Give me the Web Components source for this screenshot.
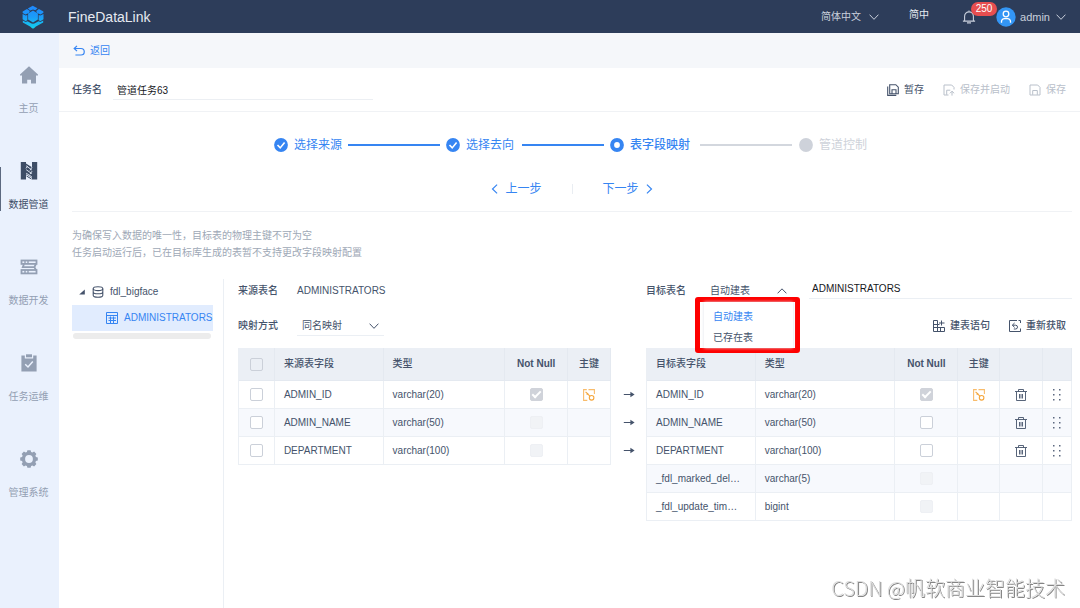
<!DOCTYPE html>
<html lang="zh-CN">
<head>
<meta charset="utf-8">
<meta name="viewport" content="width=device-width, initial-scale=1">
<title>FineDataLink</title>
<style>
  html, body { margin: 0; height: 100%; }
  body {
    font-family: "Liberation Sans", "Noto Sans CJK SC", sans-serif;
    font-size: 10px;
    line-height: 16px;
    color: #45536b;
    background: #fff;
    --blue: #3685f2;
    --muted: #9ea8b6;
    --line: #ebeff4;
  }
</style>
</head>
<body>
<fdl-app></fdl-app>

<script>
const RESET = `
  *, *::before, *::after { box-sizing: border-box; }
  button, input, select { font: inherit; color: inherit; background: none; border: 0; padding: 0; margin: 0; outline: 0; }
  button, a, select { cursor: pointer; }
  button:disabled { cursor: default; }
  a { color: inherit; text-decoration: none; }
  ul { list-style: none; margin: 0; padding: 0; }
`;

class Base extends HTMLElement {
  connectedCallback() {
    if (this.shadowRoot) return;
    const t = document.createElement('template');
    t.innerHTML = `<style>${RESET}${this.css()}</style>${this.html()}`;
    this.attachShadow({ mode: 'open' }).appendChild(t.content.cloneNode(true));
  }
  css() { return ''; }
  html() { return '<slot></slot>'; }
}

/* name: [viewBox, markup] */
const ICONS = {
  logo: ['0 0 22 24', `
    <defs><linearGradient id="g" x1="0" y1="0" x2="0" y2="24" gradientUnits="userSpaceOnUse"><stop offset="0" stop-color="#1f86ff"/><stop offset=".5" stop-color="#1b9cf8"/><stop offset="1" stop-color="#12d4ee"/></linearGradient></defs>
    <g fill="url(#g)">
      <path d="M10.700.800 15.500 3.200 13.300 5.200 11 4.400 8.300 5.400 5.800 3.600z"/>
      <path d="M5 4 7.900 6 6.800 8.100 3.500 9.400.700 7.900.700 6.500z"/>
      <path d="M16.900 4 21.400 6.500 21.400 7.800 18.500 9.400 15.100 8.100 14.200 6z"/>
      <path d="M11 5.600 15.900 8.500v6L11 17.400l-4.900-2.900V8.500z"/>
      <path d="M.600 8.900 3.600 10.500 5.400 10v4.900L3.700 16.200.600 14.300z"/>
      <path d="M21.500 8.900 18.400 10.500 16.600 10v4.900l1.700 1.300 3.200-1.900z"/>
      <path d="M.800 15.400 3.600 17.100l1.900-.900 4.600 2.600v1.500L9 22 .800 17.600z"/>
      <path d="M21.200 15.400 18.400 17.100l-1.900-.900-4.600 2.600v1.500l1.100 1.700 8.200-4.400z"/>
      <path d="M11 18.600 13.400 19.600 13.200 22.200 11 23.700 8.800 22.200 8.600 19.600z"/>
    </g>`],
  chevron: ['0 0 12 12', '<path d="M.700 3.200 6 8.800 11.300 3.200" fill="none" stroke="currentColor" stroke-width="1.200"/>'],
  chevronUp: ['0 0 12 12', '<path d="M.700 8.800 6 3.400 11.300 8.800" fill="none" stroke="currentColor" stroke-width="1.200"/>'],
  left: ['0 0 12 12', '<path d="M8.500.800 3 6 8.500 11.200" fill="none" stroke="currentColor" stroke-width="1.400"/>'],
  right: ['0 0 12 12', '<path d="M3.500.800 9 6 3.500 11.200" fill="none" stroke="currentColor" stroke-width="1.400"/>'],
  bell: ['0 0 14 14', '<path d="M2.600 11V6.300a4.400 4.400 0 0 1 8.800 0V11M.900 11.100h12.200M5 12.900h4M7 .600v1.200" fill="none" stroke="currentColor" stroke-width="1.100"/>'],
  user: ['0 0 20 20', '<circle cx="10" cy="10" r="9.700" fill="#3396f5"/><circle cx="10" cy="7" r="2.800" fill="none" stroke="#fff" stroke-width="1.300"/><path d="M5.500 15.700v-1.200A2.900 2.900 0 0 1 8.400 11.600h3.200a2.900 2.900 0 0 1 2.900 2.900v1.200" fill="none" stroke="#fff" stroke-width="1.300"/>'],
  home: ['0 0 20 20', '<path d="M10 1.200 19 9.600v1h-2v7.900h-5v-3.700H8.200v3.700H3v-7.900H1v-1z" fill="currentColor"/>'],
  pipe: ['0 0 20 20', '<path d="M1.800 1h5.200v1.600l6 3.600V1h5.200v17.500H13v-1.700L7 13.300v5.200H1.800z" fill="currentColor"/><path d="M7.500 15 12.500 18" stroke="currentColor"/><path d="M7.200 4.800 12.800 9M7.200 8.700 12.800 12.600M7.200 12.200 12.800 15.800M8.600 5.200 7 7.400M13 6.200 11 9.400M13 10.200 11 13.200" fill="none" stroke="#eaf1fd" stroke-width=".9"/>'],
  dev: ['0 0 20 20', '<g fill="none" stroke="currentColor" stroke-width="1.800"><rect x="2.500" y="3.500" width="15" height="3.400"/><path d="M5 7 3.800 10.200h11.600l1.500-3.200M15.400 10.200l1.500 2.800"/><rect x="2.500" y="13" width="15" height="3.400"/></g><path d="M6 3v4M9 3v4M6 13v4M9 13v4" stroke="currentColor" stroke-width="1.400"/>'],
  ops: ['0 0 20 20', '<path d="M2.400 2.600h3.400v3h8.400v-3h3.400v16H2.400z" fill="currentColor"/><path d="M7 1.300h6v3H7z" fill="currentColor"/><path d="M6.200 11.300 9 14 13.800 8.600" fill="none" stroke="#eaf1fd" stroke-width="1.500"/>'],
  gear: ['0 0 20 20', '<path fill="currentColor" fill-rule="evenodd" d="M8.400 1.200h3.200l.5 1.900 1.300.5 1.700-1 2.300 2.300-1 1.700.5 1.300 1.900.5v3.200l-1.900.5-.5 1.300 1 1.700-2.300 2.300-1.700-1-1.300.5-.5 1.900H8.400l-.5-1.900-1.300-.5-1.700 1-2.300-2.300 1-1.700-.5-1.300-1.900-.5V8.400l1.900-.5.5-1.300-1-1.700 2.300-2.300 1.700 1 1.300-.5zM10 6.100a3.900 3.900 0 1 0 0 7.800 3.900 3.900 0 0 0 0-7.800z"/>'],
  back: ['0 0 12 12', '<path d="M4 .900 1.200 3.500 4 6.100M1.400 3.500H8a3.200 3.200 0 0 1 0 6.500H2.400" fill="none" stroke="currentColor" stroke-width="1.200"/>'],
  save: ['0 0 12 12', '<path d="M1 1h7.700L11 3.400V11H1zM3.700 10.800V6.500h4.600v4.300" fill="none" stroke="currentColor"/>'],
  draft: ['0 0 12 12', '<path d="M2.700.700h6.100l2.500 2.500v6.500H2.700zM5 9.500V5.700h4v3.800M.700 2.600v8.800h8.600" fill="none" stroke="currentColor" stroke-width="1.100"/>'],
  saveRun: ['0 0 12 12', '<path d="M5.500 11H1V1h7.700L11 3.400v2.100M3.700 10.800V6.200h3.600M9 11.600V7.300M6.900 9.300 9 7.200l2.200 2.100" fill="none" stroke="currentColor"/>'],
  done: ['0 0 14 14', '<circle cx="7" cy="7" r="6.900" fill="currentColor"/><path d="M3.500 7 6.200 9.900 10.600 4.400" fill="none" stroke="#fff" stroke-width="1.600"/>'],
  current: ['0 0 14 14', '<circle cx="7" cy="7" r="4.900" fill="#fff" stroke="currentColor" stroke-width="4"/>'],
  pending: ['0 0 14 14', '<circle cx="7" cy="7" r="6.900" fill="currentColor"/>'],
  caret: ['0 0 12 12', '<path d="M8.800 3.400v5.200H3.200z" fill="currentColor"/>'],
  db: ['0 0 12 12', '<g fill="none" stroke="currentColor" stroke-width="1.100"><ellipse cx="6" cy="2.700" rx="4.800" ry="1.900"/><path d="M1.200 2.700v6.500c0 1.100 2.100 2 4.800 2s4.800-.900 4.800-2V2.700M1.200 5.900c0 1.100 2.100 1.900 4.800 1.900s4.800-.800 4.800-1.900"/></g>'],
  table: ['0 0 12 12', '<path d="M.500.500h11v11H.500zM.500 3.500h11M2.500 6h7.500M2.500 8.500h7.500M4.500 4.500v7M7.500 4.500v7" fill="none" stroke="currentColor"/>'],
  sql: ['0 0 12 12', '<path d="M4.500.500h-4v11h11v-4M.500 4.500h6M.500 7.500h11M4.500.500v11M7.500 7.500v4M8.500.500v5M6 3h5.500" fill="none" stroke="currentColor"/>'],
  refetch: ['0 0 12 12', '<path d="M8 .500H.500v11h11V8.500M9.500.500h2v2.500M5.600 3 3.300 5.200l2.300 2.200M3.500 5.200H6.600a1.900 1.900 0 0 1 0 3.800H4.800" fill="none" stroke="currentColor"/>'],
  key: ['0 0 12 12', '<g fill="none" stroke="currentColor" stroke-width="1.100"><path d="M.600 3.700v7.700h3.700M.600 4V.600h3.200M11.400 5V.600H5.500" opacity=".75"/><circle cx="8.600" cy="8.800" r="2.300"/><path d="M6.900 7.200 2.600 2.800M3.700 5.600 5.200 4.200"/></g>'],
  trash: ['0 0 12 12', '<path d="M0 2.500h12M3.500 2.500v-2h5v2M1.500 3v8.500h9V3M4.500 5v4.500M6 5v4.500M7.500 5v4.500" fill="none" stroke="currentColor" stroke-width=".9"/>'],
  drag: ['0 0 12 12', '<path d="M2 0h1.500v1.500H2zM8 0h1.500v1.500H8zM2 5h1.500v1.500H2zM8 5h1.500v1.500H8zM2 10h1.500v1.500H2zM8 10h1.500v1.500H8z" fill="currentColor"/>'],
  arrow: ['0 0 12 12', '<path d="M.800 5.500h8" stroke="currentColor"/><path d="M7.400 2.700 11.600 5.500l-4.200 2.800z" fill="currentColor"/>']
};

customElements.define('fdl-icon', class extends Base {
  css() { return `:host { display: block; flex: none; width: 12px; height: 12px; } svg { display: block; width: 100%; height: 100%; }`; }
  html() {
    const [box, body] = ICONS[this.getAttribute('name')];
    return `<svg viewBox="${box}" aria-hidden="true">${body}</svg>`;
  }
});

customElements.define('fdl-header', class extends Base {
  css() { return `
    :host { display: block; }
    header { display: flex; align-items: center; height: 33px; padding: 0 14px 0 22px; background: #2d3d5a; color: #c9d0dc; }
    .logo { width: 22px; height: 24px; }
    h1 { margin: 0 auto 0 24px; font-size: 14px; font-weight: 400; color: #e6eaf1; }
    button { display: flex; align-items: center; }
    .lang { gap: 8px; margin-right: 30px; }
    .lang fdl-icon, .more { width: 10px; height: 10px; }
    .short { margin-right: 33px; padding-bottom: 4px; color: #e6eaf1; }
    .bell { position: relative; margin-right: 20px; }
    .bell fdl-icon { width: 14px; height: 14px; }
    .badge { position: absolute; left: 9px; top: -8px; min-width: 26px; padding: 0 4px; border-radius: 7px; background: #e64e50; color: #fff; line-height: 14px; text-align: center; }
    .user { gap: 4px; font-size: 11px; }
    .user .face { width: 20px; height: 20px; }
    .user .more { margin-left: 2px; }
  `; }
  html() { return `
    <header>
      <fdl-icon class="logo" name="logo"></fdl-icon>
      <h1>FineDataLink</h1>
      <button class="lang" type="button">简体中文<fdl-icon name="chevron"></fdl-icon></button>
      <button class="short" type="button">简中</button>
      <button class="bell" type="button"><fdl-icon name="bell"></fdl-icon><span class="badge">250</span></button>
      <button class="user" type="button"><fdl-icon class="face" name="user"></fdl-icon>admin<fdl-icon class="more" name="chevron"></fdl-icon></button>
    </header>`; }
});

customElements.define('fdl-nav-item', class extends Base {
  css() { return `
    :host { display: block; color: #939fb3; }
    :host([active]) { color: #3d4d66; }
    a { position: relative; display: flex; flex-direction: column; align-items: center; justify-content: center; gap: 16px; height: 96px; padding: 0 2px 0 0; }
    fdl-icon { width: 20px; height: 20px; }
    :host([active]) a::before { content: ""; position: absolute; left: 0; top: 28px; width: 1px; height: 44px; background: #5c6980; }
  `; }
  html() { return `<a href="#"><fdl-icon name="${this.getAttribute('icon')}"></fdl-icon><span><slot></slot></span></a>`; }
});

customElements.define('fdl-sidebar', class extends Base {
  css() { return `:host { display: block; width: 59px; flex: none; padding-top: 10px; background: #eaf1fd; }`; }
  html() { return `<nav><slot></slot></nav>`; }
});

customElements.define('fdl-action', class extends Base {
  css() { return `
    :host { display: block; }
    button { display: flex; align-items: center; gap: 5px; }
    button:disabled { color: #b9c0ca; }
  `; }
  html() { return `<button type="button" ${this.hasAttribute('disabled') ? 'disabled' : ''}><fdl-icon name="${this.getAttribute('icon')}"></fdl-icon><span><slot></slot></span></button>`; }
});

customElements.define('fdl-task-bar', class extends Base {
  css() { return `
    :host { display: block; }
    .crumb { display: flex; align-items: center; height: 35px; padding: 0 14px; background: #f5f7fa; color: var(--blue); }
    .crumb a { display: flex; align-items: center; gap: 5px; }
    .bar { display: flex; align-items: center; height: 44px; padding: 0 14px 0 13px; border-bottom: 1px solid #f0f2f5; }
    label { font-weight: 500; margin-right: 11px; }
    input { width: 260px; height: 20px; padding: 0 4px; border-bottom: 1px solid #eceff3; color: #16181c; }
    .actions { display: flex; gap: 19px; margin-left: auto; }
  `; }
  html() { return `
    <div class="crumb"><a href="#"><fdl-icon name="back"></fdl-icon>返回</a></div>
    <div class="bar">
      <label for="task">任务名</label><input id="task" type="text" value="管道任务63">
      <div class="actions">
        <fdl-action icon="draft">暂存</fdl-action>
        <fdl-action icon="saveRun" disabled>保存并启动</fdl-action>
        <fdl-action icon="save" disabled>保存</fdl-action>
      </div>
    </div>`; }
});

customElements.define('fdl-step', class extends Base {
  css() { return `
    :host { display: flex; align-items: center; gap: 6px; font-size: 12px; color: var(--blue); white-space: nowrap; }
    :host([state="current"]) { font-weight: 500; }
    :host([state="pending"]) { color: #ced2da; }
    fdl-icon { width: 14px; height: 14px; }
  `; }
  html() { return `<fdl-icon name="${this.getAttribute('state')}"></fdl-icon><span><slot></slot></span>`; }
});

customElements.define('fdl-wizard', class extends Base {
  css() { return `
    :host { display: block; margin: 0 8px 0 13px; padding: 24px 0 13px; border-bottom: 1px solid #f0f2f5; }
    .steps { display: flex; align-items: center; justify-content: center; height: 18px; padding-right: 3px; }
    i { width: 92px; height: 2px; margin: 0 6px; background: var(--blue); }
    i.short { width: 82px; margin: 0 6px 0 8px; }
    i.rest { margin: 0 7px 0 10px; background: #d3d7de; }
    .nav { display: flex; align-items: center; justify-content: center; gap: 30px; margin-top: 26px; height: 18px; color: var(--blue); font-size: 12px; }
    .nav button { display: flex; align-items: center; gap: 5px; }
    .nav fdl-icon { width: 10px; height: 10px; }
    .sep { width: 1px; height: 10px; background: #e9edf2; }
  `; }
  html() { return `
    <div class="steps">
      <fdl-step state="done">选择来源</fdl-step><i></i>
      <fdl-step state="done">选择去向</fdl-step><i class="short"></i>
      <fdl-step state="current">表字段映射</fdl-step><i class="rest"></i>
      <fdl-step state="pending">管道控制</fdl-step>
    </div>
    <div class="nav">
      <button type="button"><fdl-icon name="left"></fdl-icon>上一步</button>
      <span class="sep"></span>
      <button type="button">下一步<fdl-icon name="right"></fdl-icon></button>
    </div>`; }
});

customElements.define('fdl-tree', class extends Base {
  css() { return `
    :host { display: block; padding-right: 10px; border-right: 1px solid var(--line); }
    a { display: flex; align-items: center; height: 26px; overflow: hidden; white-space: nowrap; }
    .root { padding-left: 4px; gap: 6px; }
    .root fdl-icon:first-child { margin-right: -2px; }
    .leaf { padding-left: 34px; gap: 6px; background: #e1ecfe; color: var(--blue); }
    .scroll { height: 6px; margin: 2px 2px 0 1px; border-radius: 3px; background: #ececec; }
  `; }
  html() { return `
    <a class="root" href="#"><fdl-icon name="caret"></fdl-icon><fdl-icon name="db"></fdl-icon>fdl_bigface</a>
    <a class="leaf" href="#"><fdl-icon name="table"></fdl-icon>ADMINISTRATORS</a>
    <div class="scroll"></div>`; }
});

customElements.define('fdl-field-table', class extends Base {
  css() { return `
    :host { display: block; }
    table { width: 100%; table-layout: fixed; border-collapse: separate; border-spacing: 0; border-left: 1px solid var(--line); }
    th, td { height: 28px; padding: 0 0 0 9px; text-align: left; font-weight: 400; border-right: 1px solid var(--line); border-bottom: 1px solid var(--line); white-space: nowrap; }
    th { height: 33px; background: #ebeff5; font-weight: 500; border-color: #e4e9f0; }
    th.nn { font-weight: 700; }
    tr:nth-child(even) td { background: #f7f9fd; }
    .mid { text-align: center; padding: 0; }
    .mid > * { margin: 0 auto; }
    input { appearance: none; display: block; width: 13px; height: 13px; border: 1px solid #cbd0d9; border-radius: 2px; background: #fff; }
    th input { background: none; }
    input:disabled { border-color: #eef0f4; background: #f1f3f6; }
    input:disabled:checked { border-color: #d0d3da; background: #d0d3da; }
    input:checked::after { content: ""; display: block; width: 9px; height: 5px; margin: 2px auto 0; border: solid #fff; border-width: 0 0 2px 2px; transform: rotate(-45deg); }
    button { display: block; }
    .key { color: #f5a63b; }
    .drag { color: #5c6980; }
  `; }
  html() {
    const target = this.getAttribute('side') === 'target';
    const rows = [['ADMIN_ID', 'varchar(20)'], ['ADMIN_NAME', 'varchar(50)'], ['DEPARTMENT', 'varchar(100)']];
    if (target) rows.push(['_fdl_marked_del…', 'varchar(5)'], ['_fdl_update_tim…', 'bigint']);
    const cols = target ? [109, 140, 63, 42, 43, 29] : [36, 109, 122, 63, 43];
    const sum = cols.reduce((a, b) => a + b);
    const body = rows.map(([name, type], i) => {
      const locked = !target || i === 0 || i > 2;
      return `<tr>
        ${target ? '' : `<td class="mid"><input type="checkbox" aria-label="${name}"></td>`}
        <td>${name}</td><td>${type}</td>
        <td class="mid"><input type="checkbox" aria-label="Not Null" ${locked ? 'disabled' : ''} ${i ? '' : 'checked'}></td>
        <td class="mid">${i ? '' : '<fdl-icon class="key" name="key"></fdl-icon>'}</td>
        ${target ? (i < 3 ? '<td class="mid"><button type="button" aria-label="删除"><fdl-icon name="trash"></fdl-icon></button></td><td class="mid"><fdl-icon class="drag" name="drag"></fdl-icon></td>' : '<td></td><td></td>') : ''}
      </tr>`;
    }).join('');
    return `<table>
      <colgroup>${cols.map(c => `<col style="width:calc(100% * ${c} / ${sum})">`).join('')}</colgroup>
      <thead><tr>
        ${target ? '' : '<th class="mid"><input type="checkbox" aria-label="全选"></th>'}
        <th>${target ? '目标表字段' : '来源表字段'}</th><th>类型</th><th class="mid nn">Not Null</th><th class="mid">主键</th>
        ${target ? '<th></th><th></th>' : ''}
      </tr></thead><tbody>${body}</tbody></table>`;
  }
});

const PANEL = `
  :host { display: block; min-width: 0; }
  .row { display: flex; align-items: center; height: 24px; }
  .row + .row { height: 22px; margin: 12px 0 11px; }
  label, .label { flex: none; width: 59px; font-weight: 500; }
  .pick { position: relative; display: grid; align-items: center; width: 87px; border-bottom: 1px solid var(--line); }
  .pick > select { grid-area: 1 / 1; appearance: none; width: 100%; height: 19px; padding: 0 5px; }
  .pick > fdl-icon { grid-area: 1 / 1; justify-self: end; margin-right: 5px; width: 10px; height: 10px; pointer-events: none; }
`;

customElements.define('fdl-source-panel', class extends Base {
  css() { return PANEL; }
  html() { return `
    <div class="row"><span class="label">来源表名</span><span>ADMINISTRATORS</span></div>
    <div class="row"><label for="mode">映射方式</label>
      <div class="pick"><select id="mode"><option>同名映射</option></select><fdl-icon name="chevron"></fdl-icon></div>
    </div>
    <fdl-field-table side="source"></fdl-field-table>`; }
});

customElements.define('fdl-target-panel', class extends Base {
  css() { return PANEL + `
    .name { flex: 1; min-width: 0; height: 20px; margin: 0 0 4px 17px; padding: 0 3px; border-bottom: 1px solid var(--line); color: #16181c; }
    .menu { position: absolute; z-index: 2; left: -10px; top: 16px; width: 105px; height: 56px; padding: 0 2px 0 4px; border: 5px solid #fe0000; border-radius: 3px; background: #fff; }
    .menu ul { height: 100%; padding: 4px 0 0 9px; box-shadow: 0 0 3px #dfe3ea; }
    .menu li { height: 21px; display: flex; align-items: center; }
    .menu [aria-selected="true"] { color: var(--blue); }
    .tools { justify-content: flex-end; gap: 19px; padding-right: 6px; }
    .tools fdl-action { font-weight: 500; }
  `; }
  html() { return `
    <div class="row"><label for="kind">目标表名</label>
      <div class="pick"><select id="kind"><option>自动建表</option><option>已存在表</option></select><fdl-icon name="chevronUp"></fdl-icon>
        <div class="menu"><ul role="listbox" aria-label="目标表名"><li role="option" aria-selected="true">自动建表</li><li role="option" aria-selected="false">已存在表</li></ul></div>
      </div>
      <input class="name" type="text" value="ADMINISTRATORS" aria-label="目标表名">
    </div>
    <div class="row tools"><fdl-action icon="sql">建表语句</fdl-action><fdl-action icon="refetch">重新获取</fdl-action></div>
    <fdl-field-table side="target"></fdl-field-table>`; }
});

customElements.define('fdl-mapping', class extends Base {
  css() { return `
    :host { display: flex; flex-direction: column; flex: 1; padding: 16px 8px 0 13px; }
    p { margin: 0 0 1px; color: var(--muted); }
    .grid { flex: 1; display: grid; grid-template-columns: 152px minmax(0, 387fr) 35px minmax(0, 426fr); margin-top: 17px; }
    fdl-source-panel { margin-left: 14px; }
    .links { padding-top: 102px; }
    .links li { display: flex; align-items: center; justify-content: center; height: 28px; }
  `; }
  html() { return `
    <p>为确保写入数据的唯一性，目标表的物理主键不可为空</p>
    <p>任务启动运行后，已在目标库生成的表暂不支持更改字段映射配置</p>
    <div class="grid">
      <fdl-tree></fdl-tree>
      <fdl-source-panel></fdl-source-panel>
      <ul class="links">${'<li><fdl-icon name="arrow"></fdl-icon></li>'.repeat(3)}</ul>
      <fdl-target-panel></fdl-target-panel>
    </div>`; }
});

customElements.define('fdl-app', class extends Base {
  css() { return `
    :host { display: flex; flex-direction: column; min-height: 100vh; }
    .body { flex: 1; display: flex; }
    main { flex: 1; min-width: 0; display: flex; flex-direction: column; }
    .mark { position: fixed; right: 15px; bottom: 5px; font: 300 20px/30px "Noto Sans CJK SC", sans-serif; color: #dcdcdc; text-shadow: 1px 1px 0 #858585; white-space: nowrap; }
  `; }
  html() { return `
    <fdl-header></fdl-header>
    <div class="body">
      <fdl-sidebar>
        <fdl-nav-item icon="home">主页</fdl-nav-item>
        <fdl-nav-item icon="pipe" active>数据管道</fdl-nav-item>
        <fdl-nav-item icon="dev">数据开发</fdl-nav-item>
        <fdl-nav-item icon="ops">任务运维</fdl-nav-item>
        <fdl-nav-item icon="gear">管理系统</fdl-nav-item>
      </fdl-sidebar>
      <main>
        <fdl-task-bar></fdl-task-bar>
        <fdl-wizard></fdl-wizard>
        <fdl-mapping></fdl-mapping>
      </main>
    </div>
    <div class="mark">CSDN @帆软商业智能技术</div>`; }
});
</script>
</body>
</html>
